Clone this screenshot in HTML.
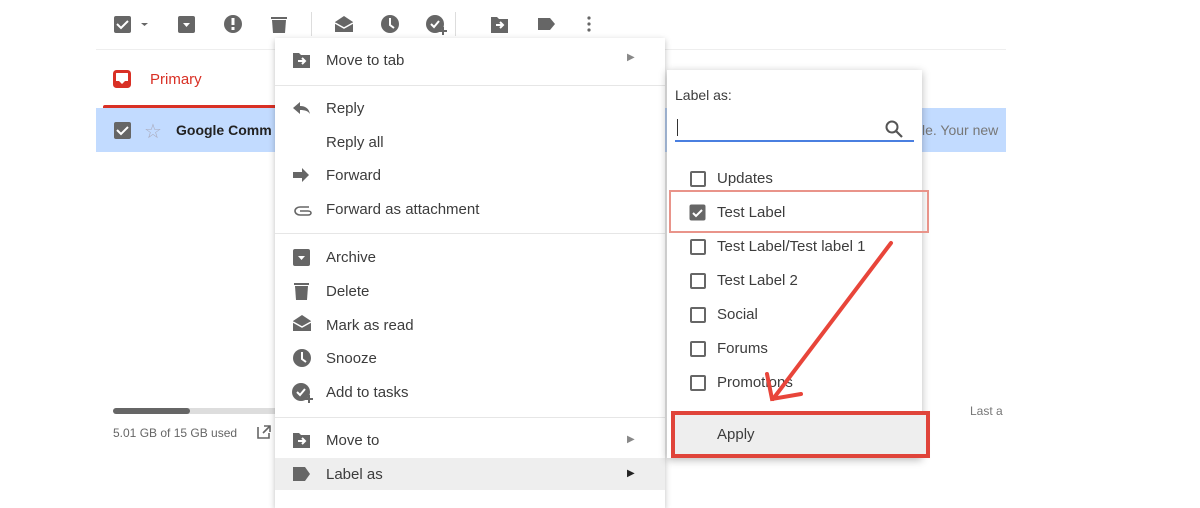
<!DOCTYPE html>
<html><head><meta charset="utf-8"><style>
*{margin:0;padding:0;box-sizing:border-box}
body{width:1200px;height:500px;overflow:hidden;background:#fff;font-family:"Liberation Sans",Arial,sans-serif;position:relative;color:#333}
.a{position:absolute}
.t{position:absolute;font-size:15px;color:#3c3c3c;white-space:nowrap}
.ic{position:absolute}
.cb{position:absolute;width:16px;height:16px;border:2px solid #666;border-radius:2px}
</style></head><body>
<!-- toolbar -->
<svg class="a" style="left:0;top:0" width="1200" height="50">
<g fill="#666">
<rect x="114" y="16" width="17" height="17" rx="2"/>
<path d="M117 24l4 4 7-7" stroke="#fff" stroke-width="2" fill="none"/>
<path d="M141 23h7l-3.5 3z"/>
<rect x="178" y="16" width="17" height="17" rx="2"/>
<path d="M183 23h7l-3.5 4z" fill="#fff"/>
<circle cx="233" cy="24" r="9"/>
<rect x="231.5" y="18" width="3" height="7" fill="#fff"/><rect x="231.5" y="27" width="3" height="3" fill="#fff"/>
<rect x="271" y="17" width="16" height="2"/><path d="M272 20h14l-1 13h-12z"/>
<path d="M335 22l9-6 9 6v10h-18z"/><path d="M335 23l9 5 9-5" stroke="#fff" stroke-width="1.5" fill="none"/>
<circle cx="390" cy="24" r="9"/><path d="M390 18v7l4 3" stroke="#fff" stroke-width="2" fill="none"/>
<circle cx="435" cy="24" r="9"/><path d="M431 24l3 3 5-6" stroke="#fff" stroke-width="2" fill="none"/><path d="M443 27v8M439 31h8" stroke="#666" stroke-width="2"/>
<path d="M491 17h6l2 2h9v14h-17z"/><path d="M496 25h6M500 22l3 3-3 3" stroke="#fff" stroke-width="2" fill="none"/>
<path d="M538 18h12l5 6-5 6h-12z"/>
<circle cx="589" cy="18" r="1.6"/><circle cx="589" cy="24" r="1.6"/><circle cx="589" cy="30" r="1.6"/>
</g>
<rect x="311" y="12" width="1" height="24" fill="#ddd"/><rect x="455" y="12" width="1" height="24" fill="#ddd"/>
</svg>
<div class="a" style="left:96px;top:49px;width:910px;height:1px;background:#eee"></div>
<!-- primary tab -->
<svg class="a" style="left:113px;top:70px" width="20" height="20"><rect x="1.5" y="1.5" width="15" height="15" rx="2" fill="none" stroke="#d93025" stroke-width="3"/><path d="M1 11h5l3 3 3-3h5v6h-16z" fill="#d93025"/></svg>
<div class="t" style="left:150px;top:71px;color:#d93025">Primary</div>
<div class="a" style="left:103px;top:105px;width:175px;height:3px;background:#d93025;border-radius:2px 2px 0 0"></div>
<!-- selected row -->
<div class="a" style="left:96px;top:108px;width:910px;height:44px;background:#c2dbff"></div>
<svg class="a" style="left:114px;top:122px" width="18" height="18"><rect width="17" height="17" rx="2" fill="#666"/><path d="M3 8l4 4 7-7" stroke="#fff" stroke-width="2" fill="none"/></svg>
<div class="t" style="left:144px;top:119px;color:#aab;font-size:20px">☆</div>
<div class="t" style="left:176px;top:122px;font-weight:bold;color:#222;font-size:14px">Google Comm</div>
<div class="t" style="left:922px;top:122px;color:#777;font-size:14px">le. Your new</div>
<!-- storage -->
<div class="a" style="left:113px;top:408px;width:165px;height:6px;background:#ddd;border-radius:3px"></div>
<div class="a" style="left:113px;top:408px;width:77px;height:6px;background:#666;border-radius:3px"></div>
<div class="t" style="left:113px;top:426px;font-size:12px;color:#666">5.01 GB of 15 GB used</div>
<svg class="a" style="left:256px;top:424px" width="16" height="16"><path d="M2 3v11h11V9M8 2h6v6M14 2L7 9" stroke="#666" stroke-width="1.6" fill="none"/></svg>
<div class="t" style="left:970px;top:404px;font-size:12px;color:#777">Last a</div>
<!-- main menu -->
<div class="a" style="left:275px;top:38px;width:390px;height:470px;background:#fff;box-shadow:0 2px 6px rgba(0,0,0,.25)"></div>
<div class="a" style="left:275px;top:85px;width:390px;height:1px;background:#e6e6e6"></div>
<div class="a" style="left:275px;top:233px;width:390px;height:1px;background:#e6e6e6"></div>
<div class="a" style="left:275px;top:417px;width:390px;height:1px;background:#e6e6e6"></div>
<div class="a" style="left:275px;top:458px;width:390px;height:32px;background:#eee"></div>
<svg class="a" style="left:290px;top:40px" width="30" height="460"><g fill="#666">
<path d="M3 13h6l2 2h9v13h-17z"/><path d="M8 21h6M12 18l3 3-3 3" stroke="#fff" stroke-width="2" fill="none"/>
<path d="M3 68l7-6v4c6 0 9 3 10 8-2-3-5-4-10-4v4z"/>
<path d="M3 132h9v-4l7 7-7 7v-4h-9z"/>
<path d="M19 167l-9 0c-3 0-5 2-5 4s2 4 5 4h8c2 0 3-1 3-2s-1-2-3-2h-8" stroke="#666" stroke-width="1.6" fill="none"/>
<rect x="3" y="209" width="17" height="17" rx="2"/><path d="M8 216h7l-3.5 4z" fill="#fff"/>
<rect x="4" y="243" width="15" height="2"/><path d="M5 246h13l-1 14h-11z"/>
<path d="M3 281l9-6 9 6v10h-18z"/><path d="M3 282l9 5 9-5" stroke="#fff" stroke-width="1.5" fill="none"/>
<circle cx="12" cy="318" r="9"/><path d="M12 312v7l4 3" stroke="#fff" stroke-width="2" fill="none"/>
<circle cx="11" cy="352" r="9"/><path d="M7 352l3 3 5-6" stroke="#fff" stroke-width="2" fill="none"/><path d="M19 355v8M15 359h8" stroke="#666" stroke-width="2"/>
<path d="M3 393h6l2 2h9v13h-17z"/><path d="M8 401h6M12 398l3 3-3 3" stroke="#fff" stroke-width="2" fill="none"/>
<path d="M3 427h12l5 7-5 7h-12z"/>
</g></svg>
<div class="t" style="left:326px;top:52px">Move to tab</div>
<div class="t" style="left:326px;top:100px">Reply</div>
<div class="t" style="left:326px;top:134px">Reply all</div>
<div class="t" style="left:326px;top:167px">Forward</div>
<div class="t" style="left:326px;top:201px">Forward as attachment</div>
<div class="t" style="left:326px;top:249px">Archive</div>
<div class="t" style="left:326px;top:283px">Delete</div>
<div class="t" style="left:326px;top:317px">Mark as read</div>
<div class="t" style="left:326px;top:350px">Snooze</div>
<div class="t" style="left:326px;top:384px">Add to tasks</div>
<div class="t" style="left:326px;top:432px">Move to</div>
<div class="t" style="left:326px;top:466px">Label as</div>
<div class="t" style="left:627px;top:52px;font-size:10px;color:#888">▶</div>
<div class="t" style="left:627px;top:434px;font-size:10px;color:#888">▶</div>
<div class="t" style="left:627px;top:468px;font-size:10px;color:#222">▶</div>
<!-- label panel -->
<div class="a" style="left:667px;top:70px;width:255px;height:388px;background:#fff;box-shadow:0 2px 8px rgba(0,0,0,.28)"></div>
<div class="t" style="left:675px;top:87px;font-size:14px">Label as:</div>
<div class="a" style="left:677px;top:119px;width:1px;height:17px;background:#333"></div>
<svg class="a" style="left:885px;top:120px" width="20" height="20"><circle cx="7" cy="7" r="5.5" stroke="#555" stroke-width="2" fill="none"/><path d="M11 11l6 6" stroke="#555" stroke-width="2.2"/></svg>
<div class="a" style="left:675px;top:140px;width:239px;height:1.5px;background:#4a7fe0"></div>
<div class="cb" style="left:690px;top:171px"></div><div class="t" style="left:717px;top:170px">Updates</div>
<svg class="a" style="left:689px;top:204px" width="18" height="18"><rect x="0.5" y="0.5" width="16" height="16" rx="2" fill="#666"/><path d="M4 9l3 3 6-6" stroke="#fff" stroke-width="2" fill="none"/></svg>
<div class="t" style="left:717px;top:204px">Test Label</div>
<div class="cb" style="left:690px;top:239px"></div><div class="t" style="left:717px;top:238px">Test Label/Test label 1</div>
<div class="cb" style="left:690px;top:273px"></div><div class="t" style="left:717px;top:272px">Test Label 2</div>
<div class="cb" style="left:690px;top:307px"></div><div class="t" style="left:717px;top:306px">Social</div>
<div class="cb" style="left:690px;top:341px"></div><div class="t" style="left:717px;top:340px">Forums</div>
<div class="cb" style="left:690px;top:375px"></div><div class="t" style="left:717px;top:374px">Promotions</div>
<div class="a" style="left:669px;top:190px;width:260px;height:43px;border:2.5px solid #e9948a"></div>
<div class="a" style="left:671px;top:411px;width:259px;height:47px;background:#eee;border:4px solid #e0443a"></div>
<div class="t" style="left:717px;top:426px">Apply</div>
<svg class="a" style="left:0;top:0" width="1200" height="500"><g stroke="#e8453a" stroke-width="4" stroke-linecap="round" fill="none">
<path d="M891 243L773 399"/><path d="M767 374L772 399L801 394"/></g></svg>
</body></html>
